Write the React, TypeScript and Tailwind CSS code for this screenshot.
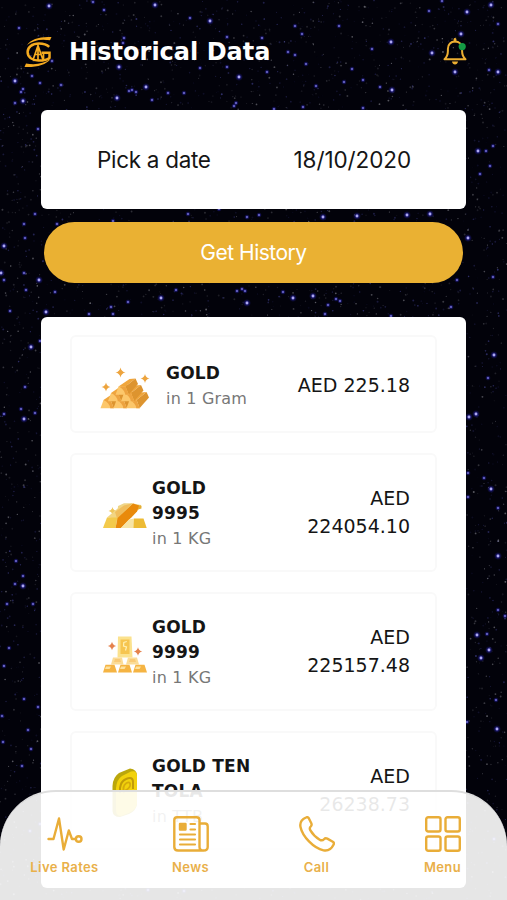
import React from 'react';

type Point = [number, number];

const BRIGHT_STARS: Point[] = [
    [49, 6], [155, 5], [93, 2], [104, 10], [19, 28], [190, 18], [210, 21], [124, 38], [123, 43], [227, 37], [262, 38],
    [288, 52], [119, 67], [52, 61], [15, 81], [23, 101], [15, 103], [21, 92], [23, 89], [40, 83], [61, 85], [32, 76],
    [146, 87], [117, 98], [152, 100], [129, 91], [132, 90], [136, 92], [168, 93], [184, 93], [200, 68], [239, 77],
    [227, 67], [267, 72], [236, 103], [234, 106], [274, 109], [442, 1], [491, 5], [467, 12], [498, 24], [461, 34],
    [432, 53], [455, 72], [498, 72], [489, 70], [303, 107], [363, 108], [38, 129], [478, 151], [480, 174], [35, 214],
    [188, 214], [219, 209], [247, 217], [259, 215], [323, 217], [357, 216], [407, 215], [430, 214], [113, 221],
    [57, 224], [468, 238], [457, 280], [46, 312], [55, 292], [89, 314], [113, 314], [111, 307], [128, 302],
    [161, 298], [176, 290], [237, 291], [242, 289], [245, 291], [247, 303], [283, 292], [293, 298], [313, 296],
    [336, 299], [340, 301], [328, 305], [325, 314], [451, 307], [391, 316], [494, 355], [469, 417], [476, 414],
    [484, 478], [491, 489], [468, 497], [468, 473], [498, 556], [498, 508], [498, 610], [505, 616], [477, 635],
    [487, 634], [489, 650], [481, 658], [496, 700], [488, 378], [24, 224], [25, 238], [4, 246], [1, 273], [4, 280],
    [24, 273], [39, 280], [26, 290], [10, 311], [40, 341], [31, 347], [24, 419], [35, 413], [21, 409], [4, 414],
    [25, 387], [467, 722], [497, 729], [16, 561], [23, 586], [15, 584], [23, 576], [7, 604], [33, 604], [9, 648],
    [4, 666], [24, 699], [38, 707], [2, 716], [3, 742], [31, 749], [22, 766], [28, 730], [490, 166], [493, 146],
    [486, 151], [493, 277], [429, 11], [391, 42], [339, 26], [302, 34], [295, 26], [392, 90], [380, 87], [344, 82],
    [363, 80], [316, 86], [372, 49], [295, 55], [306, 64], [352, 69], [40, 824], [30, 831], [494, 839], [148, 890],
    [184, 891],
];

// The ones that stand out; the rest are drawn dimmer
const BIG_STARS = new Set([
    '155,5', '49,6', '119,67', '23,101', '15,81', '210,21', '239,77', '146,87', '117,98', '467,12', '491,5', '461,34',
    '432,53', '455,72', '498,72', '39,280', '46,312', '323,217', '357,216', '430,214', '407,215', '161,298', '247,303',
    '313,296', '293,298', '478,151', '494,355', '469,417', '476,414', '491,489', '477,635', '489,650', '481,658',
    '31,347', '24,419', '23,586', '1,273', '497,729', '4,246', '391,42', '392,90', '498,556', '468,238',
]);

// Seeded so the faint dust lands in the same place on every render
const makeDust = (count: number) => {
    let seed = 7331;
    const next = () => {
        seed = (seed * 16807) % 2147483647;
        return seed / 2147483647;
    };
    return Array.from({ length: count }, () => ({
        x: next() * 507,
        y: next() * 900,
        r: 0.45 + next() * 0.55,
        o: 0.12 + Math.pow(next(), 2) * 0.5,
        fill: next() > 0.5 ? '#4a4aa0' : '#9a9aa2',
    }));
};

const DUST = makeDust(6500);

const Starfield: React.FC = () => (
    <svg className="absolute inset-0" width="507" height="900" viewBox="0 0 507 900">
        <defs>
            <radialGradient id="glow">
                <stop offset="0" stopColor="#3a35d8" stopOpacity="0.9" />
                <stop offset="0.5" stopColor="#2622a4" stopOpacity="0.55" />
                <stop offset="1" stopColor="#1a1780" stopOpacity="0" />
            </radialGradient>
        </defs>
        {DUST.map((d, i) => (
            <circle key={i} cx={d.x} cy={d.y} r={d.r} fill={d.fill} opacity={d.o} />
        ))}
        {BRIGHT_STARS.map(([x, y]) => {
            const big = BIG_STARS.has(`${x},${y}`);
            return (
                <g key={`${x},${y}`}>
                    <circle cx={x} cy={y} r={big ? 4 : 2.8} fill="url(#glow)" />
                    <circle cx={x} cy={y} r={big ? 1.4 : 0.9} fill="#b4b0f4" opacity={big ? 0.95 : 0.6} />
                </g>
            );
        })}
    </svg>
);

const Logo: React.FC = () => (
    <svg width="28" height="32" viewBox="0 0 28 32" fill="none" stroke="#f5ab20">
        <path d="M3 9C7 3 16 .3 27.500 1L26 4.200C16 2.600 9 4.500 3 9Z" fill="#f5ab20" stroke="none" />
        <path d="M26.500 23C22 28.800 13 31.500 .5 31L2 27.400C11 29.400 20 27.500 26.500 23Z" fill="#f5ab20" stroke="none" />
        <path d="M25.200 10.800C22.800 8.500 19 7.500 15 7.500C8 7.500 3.600 11.200 3.600 16S8 24.600 14.500 24.600C19.500 24.600 23.500 23.800 25.500 21.800V16.800H17.500" strokeWidth="2.500" />
        <path d="M9 24L14 9.500L19 24M11 18.500H17M14 10V24M19.500 17V24" strokeWidth="1.700" />
    </svg>
);

const Bell: React.FC = () => (
    <svg width="24" height="28" viewBox="0 0 24 28" fill="none" stroke="#edaf32" strokeWidth="2" strokeLinejoin="round" strokeLinecap="round">
        <path d="M12 1.500V3" strokeWidth="2.800" />
        <path d="M1.500 21.300C4 19 4.900 17 4.900 13V10.800C4.900 6.300 7.900 3.600 12 3.600S19.100 6.300 19.100 10.800V13C19.100 17 20 19 22.500 21.300Z" />
        <path d="M9 23.600H15C14.700 25.600 13.500 26.600 12 26.600S9.300 25.600 9 23.600Z" fill="#edaf32" stroke="none" />
        <circle cx="19.200" cy="8.600" r="3.600" fill="#149b45" stroke="none" />
    </svg>
);

const Sparkle: React.FC<{ x: number; y: number; s?: number; fill: string }> = ({ x, y, s = 1, fill }) => (
    <path d="M0-5Q.8-.8 5 0Q.8.8 0 5Q-.8.8-5 0Q-.8-.8 0-5Z" transform={`translate(${x} ${y}) scale(${s})`} fill={fill} />
);

const Ingot: React.FC<{ x: number; y: number }> = ({ x, y }) => (
    <g transform={`translate(${x} ${y})`}>
        <path d="M3 0L14-7.500L20-8L10 0Z" fill="#f0a63c" />
        <path d="M10 0L20-8L22.500-2.500L13 8.200Z" fill="#dd942f" />
        <path d="M0 8.200L3 0H10L13.300 8.200Z" fill="#fcc76b" />
        <path d="M3 0H10L13.300 8.200H9.800Q9 2.800 3 0Z" fill="#eda340" />
    </g>
);

const GoldPile: React.FC = () => (
    <svg width="50" height="42" viewBox="0 0 50 42">
        <Sparkle x={20.5} y={5.5} fill="#eda43e" />
        <Sparkle x={45} y={11.5} s={0.9} fill="#eda43e" />
        <Sparkle x={6} y={20} s={0.9} fill="#eda43e" />
        <Ingot x={0.5} y={33} />
        <Ingot x={13.5} y={33} />
        <Ingot x={26.5} y={33} />
        <Ingot x={8} y={26} />
        <Ingot x={21} y={26} />
        <Ingot x={15.5} y={19.5} />
    </svg>
);

const GoldBars: React.FC = () => (
    <svg width="44" height="27" viewBox="0 0 44 27">
        <Sparkle x={9.5} y={9} s={0.8} fill="#efc75d" />
        <path d="M15 4L21 1.200H29L38 3L39 5L36 7L28 16L14 18Z" fill="#efd68a" />
        <path d="M31 3L38 3.400L38.500 6.500L33 8Z" fill="#e4ad34" />
        <path d="M4 15.500L17 4.500L29 1.500L14 16.500Z" fill="#f2d583" />
        <path d="M12 10L21 3.500L29 1.500L14 16.500Z" fill="#f0bd5c" />
        <path d="M4 15.500H14.500L12.500 26H0Z" fill="#f3ca4c" />
        <path d="M14.500 16L30 1.500L36 3.500L34 9.500L18 26H12.500Z" fill="#e98a0b" />
        <path d="M18 26L26 17.500L31 16.500V26Z" fill="#f7e4a5" />
        <path d="M31 16.500H40.500L43.700 26H30.500Z" fill="#edbb35" />
    </svg>
);

const GoldStack: React.FC = () => (
    <svg width="44" height="37" viewBox="0 0 44 37">
        <Sparkle x={9} y={10} s={0.85} fill="#e5824c" />
        <Sparkle x={35} y={15.5} s={0.85} fill="#e5824c" />
        <path d="M15 .5H28.500L29.500 21.500H14.500Z" fill="#fbe28e" />
        <path d="M17.500 3.500H26.500V18H17.500Z" fill="#f6c550" />
        <path d="M23.800 5.500L20.800 6.500L20.500 10L23.500 11L22.500 14.500" stroke="#fff0b4" strokeWidth="1.200" fill="none" />
        <path d="M8 28.500L10 21.500H19L20.500 28.500ZM23 28.500L25 21.500H34L36 28.500Z" fill="#fbdc97" />
        <path d="M12 23H17L18 26H11ZM27 23H32L33 26H26Z" fill="#f9ca76" />
        <path d="M0 36.500L2.500 28.800H11.500L14 36.500ZM15 36.500L17.500 28.800H26.500L29 36.500ZM30 36.500L32.500 28.800H41.500L44 36.500Z" fill="#f5b443" />
        <path d="M3 30.500H8L6.500 33H2ZM18 30.500H23L21.500 33H17ZM33 30.500H38L36.500 33H32Z" fill="#fde2a0" />
    </svg>
);

const GoldCoinBar: React.FC = () => (
    <svg width="26" height="50" viewBox="0 0 26 50">
        <path d="M.5 18Q1 9 7 5L18 .5Q25 1 25 8V36Q24 43 17 46L8 49Q1 49 .5 43Z" fill="#bba70c" />
        <path d="M4 20Q5 11 10 8L19 3.500Q25 2 25 8V36Q24 42 17 45L9 48Q4 48 4 42Z" fill="#f2d20c" />
        <path d="M8 25V20Q9 13 14 11Q21 8 21 14V21" fill="none" stroke="#c29c07" strokeWidth="2" />
        <path d="M12 25Q10 18 14.500 15Q19 13 18 18Q17 21 12 23" fill="none" stroke="#d6ab0a" strokeWidth="1.800" />
    </svg>
);

interface Rate {
    name: string;
    unit: string;
    price: string;
    icon: React.ReactNode;
    wide?: boolean;
}

const RATES: Rate[] = [
    { name: 'GOLD', unit: 'in 1 Gram', price: 'AED 225.18', icon: <GoldPile />, wide: true },
    { name: 'GOLD 9995', unit: 'in 1 KG', price: 'AED 224054.10', icon: <GoldBars /> },
    { name: 'GOLD 9999', unit: 'in 1 KG', price: 'AED 225157.48', icon: <GoldStack /> },
    { name: 'GOLD TEN TOLA', unit: 'in TTB', price: 'AED 26238.73', icon: <GoldCoinBar /> },
];

const RateCard: React.FC<{ rate: Rate }> = ({ rate }) => (
    <div className={`flex shrink-0 items-center rounded-md border-2 border-[#f9f9f9] pr-[25px] ${rate.wide ? 'h-[98px] pl-[28px]' : 'h-[119px] pl-[31px]'}`}>
        <div className={`flex shrink-0 justify-center ${rate.wide ? 'w-[50px] pt-[7px]' : 'w-[44px] pt-[5px]'}`}>{rate.icon}</div>
        <div className={`shrink-0 ${rate.wide ? 'ml-4 w-[104px] pt-[3px]' : 'ml-[5px] w-[108px] pt-[2px]'}`}>
            <h2 className={`text-[17px] leading-[25px] font-bold tracking-[0.2px] text-[#151515] ${rate.name === 'GOLD TEN TOLA' ? 'w-[108px]' : 'w-[76px]'}`}>{rate.name}</h2>
            <p className="text-[16px] leading-[25px] tracking-[0.2px] text-[#777777]">{rate.unit}</p>
        </div>
        <p className={`ml-auto text-right text-[19px] leading-[28px] text-[#151515] ${rate.wide ? 'pt-px whitespace-nowrap' : 'w-[110px] pb-px'}`}>{rate.price}</p>
    </div>
);

const PulseIcon = () => (
    <svg width="36" height="36" viewBox="0 0 36 36" fill="none" stroke="#e9ad38" strokeWidth="2.400" strokeLinejoin="round" strokeLinecap="round">
        <path d="M1.500 23H6.500L12 2.500L16.700 33.500L21.800 14.500L25 23H28.500" />
        <circle cx="31.700" cy="23" r="2.800" />
    </svg>
);

const NewsIcon = () => (
    <svg width="36" height="36" viewBox="0 0 36 36" fill="none" stroke="#e9ad38" strokeWidth="2.400" strokeLinejoin="round" strokeLinecap="round">
        <path d="M30.500 34.500H5Q1.300 34.500 1.300 31V4Q1.300 1.300 4 1.300H23.500Q26.500 1.300 26.500 4V31Q26.500 34.500 30.500 34.500Q34.700 34.500 34.700 31V10.500Q34.700 7.500 32 7.500H26.500" />
        <rect x="7" y="8" width="5.500" height="5.500" fill="#e9ad38" />
        <path d="M17.500 8H22M17.500 13.500H22M7 18.500H22M7 23.500H22M7 28.500H22" strokeWidth="2.200" />
    </svg>
);

const CallIcon = () => (
    <svg width="36" height="36" viewBox="0 0 36 36" fill="none" stroke="#e9ad38" strokeWidth="2.400" strokeLinejoin="round">
        <path d="M7 1.500C8 1 9.200 1.300 9.800 2.200L12.300 7.200C12.900 8.400 12.600 9.500 11.700 10.500C10.400 11.800 10.600 13 11.400 14.400C13.300 17.700 17 21.500 20.700 23.700C22.500 24.800 23.800 24.500 25 23.200C25.900 22.200 27 22 28.300 22.600L33.800 25.700C35 26.500 35.100 27.600 34.500 28.700C32.200 33.300 29.200 35.300 24.500 34.300C14.500 32.200 3.500 20.500 1.500 11C.6 6.500 3.200 3.200 7 1.500Z" />
    </svg>
);

const MenuIcon = () => (
    <svg width="36" height="36" viewBox="0 0 36 36" fill="none" stroke="#e9ad38" strokeWidth="2.400">
        <rect x="1.200" y="1.200" width="14.300" height="14.300" rx="2" />
        <rect x="20.500" y="1.200" width="14.300" height="14.300" rx="2" />
        <rect x="1.200" y="20.500" width="14.300" height="14.300" rx="2" />
        <rect x="20.500" y="20.500" width="14.300" height="14.300" rx="2" />
    </svg>
);

const TabItem: React.FC<{ icon: React.ReactNode; label: string }> = ({ icon, label }) => (
    <a href="#" className="flex w-[126px] flex-col items-center pt-6">
        {icon}
        <span className="mt-[5px] font-['Inter',sans-serif] text-[13px] leading-5 font-semibold tracking-[0.4px] text-[#e9b04a]">{label}</span>
    </a>
);

const App: React.FC = () => {
    return (
        <div className="relative h-[900px] w-[507px] overflow-hidden bg-[#02020a] font-['DejaVu_Sans',Verdana,sans-serif]">
            <Starfield />

            <div className="relative flex h-full flex-col">
                <header className="flex h-[110px] shrink-0 items-start pt-9 pr-10 pl-6">
                    <Logo />
                    <h1 className="ml-[17px] text-[24px] leading-8 font-bold whitespace-nowrap text-white">Historical Data</h1>
                    <div className="mt-[2px] ml-auto">
                        <Bell />
                    </div>
                </header>

                <main className="flex flex-col pr-[41px] pl-[41px]">
                    <section className="flex h-[99px] items-center justify-between rounded-md bg-white pr-[55px] pl-14 font-['Inter',sans-serif] text-[22.5px] text-[#151515]">
                        <span className="tracking-[-0.3px]">Pick a date</span>
                        <span className="tracking-[-0.1px]">18/10/2020</span>
                    </section>

                    <button className="mx-[3px] mt-[13px] h-[61px] rounded-full bg-[#eab133] pt-px font-['Inter',sans-serif] text-[21px] tracking-[-0.5px] text-white">
                        Get History
                    </button>

                    <section className="mt-[34px] flex h-[571px] flex-col gap-5 overflow-hidden rounded-md bg-white px-[29px] pt-[18px]">
                        {RATES.map((rate) => (
                            <RateCard key={rate.name} rate={rate} />
                        ))}
                    </section>
                </main>
            </div>

            {/* Translucent tab bar over the list */}
            <nav className="absolute bottom-0 left-0 flex h-[110px] w-full justify-center rounded-t-[56px] border-t-2 border-[#dedede] bg-white/90">
                <TabItem icon={<PulseIcon />} label="Live Rates" />
                <TabItem icon={<NewsIcon />} label="News" />
                <TabItem icon={<CallIcon />} label="Call" />
                <TabItem icon={<MenuIcon />} label="Menu" />
            </nav>
        </div>
    );
};

export default App;
